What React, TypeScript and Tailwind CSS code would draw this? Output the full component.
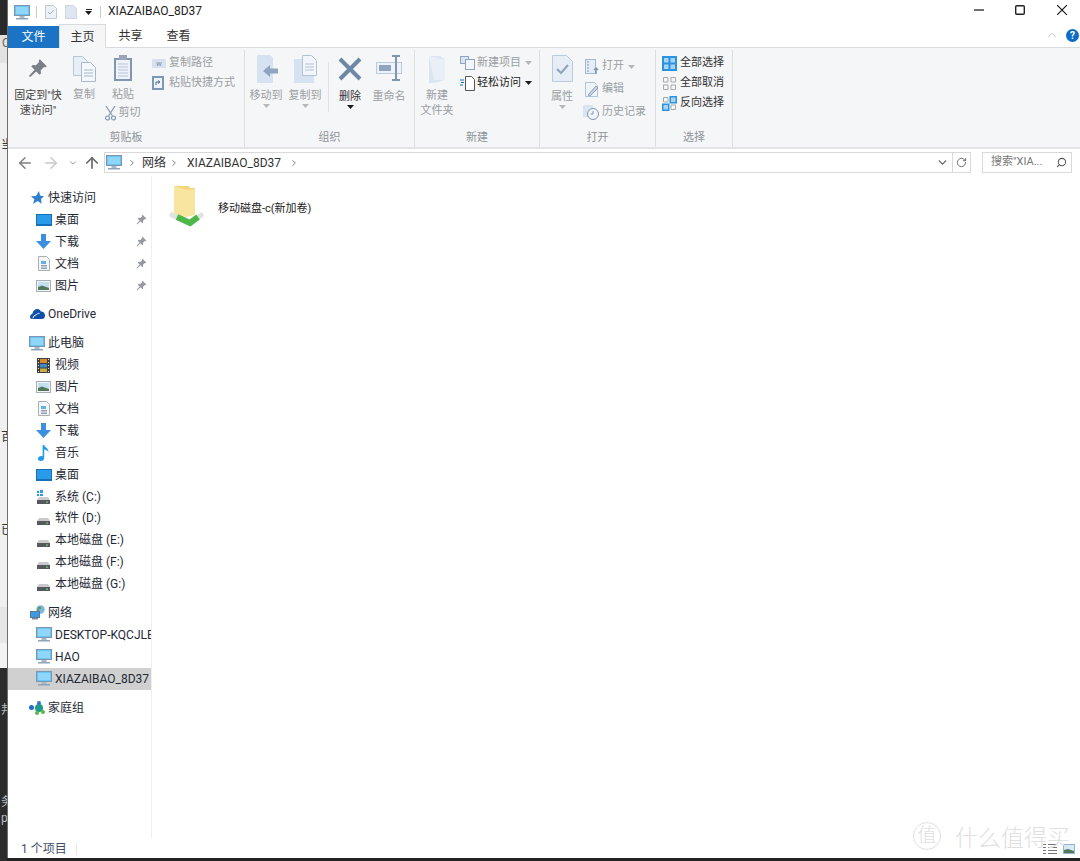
import React from "react";
import { ArrowLeft, ArrowRight, ArrowUp, ChevronDown, ChevronRight, ChevronUp, RotateCw, Search } from "lucide-react";

const font = { fontFamily: 'Roboto, "Noto Sans CJK SC", sans-serif' };

const Caret = ({ dark = false }: { dark?: boolean }) => (
  <svg width="7" height="4" viewBox="0 0 7 4" className="block">
    <path d="M0 0h7L3.5 4z" fill={dark ? "#1a1a1a" : "#b8b8b8"} />
  </svg>
);

const PinIcon = ({ size = 12, color = "#8a9099" }: { size?: number; color?: string }) => (
  <svg width={size} height={size} viewBox="0 0 16 16">
    <path d="M9.5 1 15 6.5l-1.2 1-1-.4-2.6 2.6.2 2.6-1.2 1.1-2.6-2.7L2 15l-1 0 0-1 4.3-4.6-2.7-2.6 1.1-1.2 2.6.2 2.6-2.6-.4-1z" fill={color} />
  </svg>
);

const MonitorIcon = ({ w = 16, h = 15 }: { w?: number; h?: number }) => (
  <svg width={w} height={h} viewBox="0 0 16 15">
    <rect x="0.5" y="0.5" width="15" height="10" fill="#4db4f0" stroke="#7d95ad" />
    <rect x="1.5" y="1.5" width="13" height="8" fill="#8ed6fa" />
    <rect x="5.5" y="11" width="5" height="2" fill="#a9b8c8" />
    <rect x="2" y="13" width="12" height="1.5" fill="#8fa3b8" />
  </svg>
);

const DesktopIcon = () => (
  <svg width="16" height="12" viewBox="0 0 16 12">
    <rect x="0.5" y="0.5" width="15" height="10" fill="#2a9be8" stroke="#1670b8" />
    <rect x="0" y="10" width="16" height="2" fill="#1670b8" />
  </svg>
);

const DownloadIcon = () => (
  <svg width="15" height="15" viewBox="0 0 15 15">
    <path d="M5 0h5v7h5l-7.5 8L0 7h5z" fill="#3a8fe0" />
  </svg>
);

const DocIcon = () => (
  <svg width="12" height="15" viewBox="0 0 12 15">
    <path d="M.5.5h8l3 3v11H.5z" fill="#f4f6f8" stroke="#a8aeb5" />
    <rect x="3" y="5" width="5" height="3" fill="#62b0e8" />
    <path d="M3 9.5h6M3 11h6M3 12.5h6" stroke="#8da0b2" />
  </svg>
);

const PictureIcon = () => (
  <svg width="15" height="12" viewBox="0 0 15 12">
    <rect x="0.5" y="0.5" width="14" height="11" fill="#f2f4f6" stroke="#a8aeb5" />
    <rect x="2" y="2" width="11" height="8" fill="#c4dff0" />
    <path d="M2 7l4-1.5L13 8v2H2z" fill="#52795a" />
  </svg>
);

const VideoIcon = () => (
  <svg width="13" height="15" viewBox="0 0 13 15">
    <rect width="13" height="15" fill="#3c3f44" />
    <rect x="3" y="1" width="7" height="4" fill="#d98a2b" />
    <rect x="3" y="6" width="7" height="3.5" fill="#3e8ac8" />
    <rect x="3" y="10.5" width="7" height="3.5" fill="#c7b23e" />
    <path d="M1 1.5h1M1 4.5h1M1 7.5h1M1 10.5h1M1 13.5h1M11 1.5h1M11 4.5h1M11 7.5h1M11 10.5h1M11 13.5h1" stroke="#e4e4e4" />
  </svg>
);

const MusicIcon = () => (
  <svg width="11" height="16" viewBox="0 0 11 16">
    <path d="M4.6 0h1.6c.2 2.4 4.8 3.2 4.2 7.4C9.8 5.6 8 4.8 6.2 4.6V13c0 1.8-1.6 3-3.4 3C1.2 16 0 15 0 13.7c0-1.6 1.8-2.7 3.4-2.6.5 0 .9.1 1.2.3z" fill="#1f9bea" />
  </svg>
);

const DriveIcon = ({ win = false }: { win?: boolean }) => (
  <svg width="13" height="14" viewBox="0 0 13 14">
    {win && <path d="M0 1h2v2H0zM3 0h3v3H3zM0 4h2v2H0zM3 4h3v2H3z" fill="#2d9ae8" />}
    <path d="M2 7h9l2 3H0z" fill="#c8cacc" />
    <rect y="10" width="13" height="4" fill="#55585c" />
    <rect x="9" y="11.5" width="2" height="1.2" fill="#6fd06a" />
  </svg>
);

const StarIcon = () => (
  <svg width="14" height="14" viewBox="0 0 14 14">
    <path d="M9 0l1 4.6 4 .6-3 2.8.6 4.8L7.6 10 3 13l1.4-4.8L1 5.2l5-.2z" fill="#2f7fd0" />
  </svg>
);

const CloudIcon = () => (
  <svg width="15" height="10" viewBox="0 0 15 10">
    <path d="M0 8c0-1.600 1-2.800 2.300-3C3 2 5-.2 7.400 0c1.700.1 2.900 1.100 3.500 2.500C13 2.400 15 4 15 6.500c0 2-1.200 3.500-3 3.500H2C.8 10 0 9.200 0 8z" fill="#0f4fa8" />
    <path d="M3 9.300c.2-1.800 1.500-3.200 3.200-3.400.7-1 2-1.700 3.300-1.500" fill="none" stroke="#fff" strokeWidth="1" />
  </svg>
);

const NetworkIcon = () => (
  <svg width="15" height="15" viewBox="0 0 15 15">
    <circle cx="10.500" cy="4.500" r="4.200" fill="#7bb4dd" />
    <path d="M8 2h3v2H9v2H7z" fill="#5f9a52" />
    <rect x="0.500" y="6.500" width="9" height="6" fill="#3a9be4" stroke="#5b7794" />
    <rect x="2" y="13" width="6" height="1.500" fill="#7d8ea0" />
  </svg>
);

const HomegroupIcon = () => (
  <svg width="16" height="14" viewBox="0 0 16 14">
    <circle cx="2.500" cy="6.500" r="2.500" fill="#1f6fc4" />
    <circle cx="10" cy="7" r="4" fill="#1d9a8a" />
    <circle cx="10" cy="2" r="2" fill="#2b74c8" />
    <circle cx="14" cy="11" r="2" fill="#58b848" />
    <circle cx="8" cy="12" r="2" fill="#58b848" />
  </svg>
);

const navRow = "flex items-center h-[21.9px] text-[12px] text-[#1f2a36] whitespace-nowrap";

const QuickItem = ({ icon, label }: { icon: React.ReactNode; label: string }) => (
  <div className={navRow + " pl-[24px]"}>
    <span className="w-[23px] flex justify-center shrink-0">{icon}</span>
    <span className="flex-1">{label}</span>
    <span className="mr-[4px] opacity-90"><PinIcon size={11} /></span>
  </div>
);

const SubItem = ({ icon, label, selected = false }: { icon: React.ReactNode; label: string; selected?: boolean }) => (
  <div className={selected ? navRow + " pl-[24px] bg-[#d0d0d0]" : navRow + " pl-[24px]"}>
    <span className="w-[23px] flex justify-center shrink-0">{icon}</span>
    <span className="overflow-hidden">{label}</span>
  </div>
);

const RootItem = ({ icon, label }: { icon: React.ReactNode; label: string }) => (
  <div className={navRow + " pl-[18px]"}>
    <span className="w-[22px] flex justify-center shrink-0">{icon}</span>
    <span>{label}</span>
  </div>
);

const GroupLabel = ({ text }: { text: string }) => (
  <div className="h-[17px] text-center text-[11px] leading-[16px] text-[#8f9499]">{text}</div>
);

const BigLabel = ({ lines, caret, dark }: { lines: string[]; caret?: boolean; dark?: boolean }) => (
  <div className={dark ? "text-center text-[11px] leading-[15px] text-[#333]" : "text-center text-[11px] leading-[15px] text-[#9a9ea3]"}>
    {lines.map((l) => (
      <div key={l} className="whitespace-nowrap">{l}</div>
    ))}
    {caret && <div className="flex justify-center mt-[1px]"><Caret dark={dark} /></div>}
  </div>
);

const App = () => {
  return (
    <div className="relative flex w-[1080px] h-[861px] overflow-hidden bg-[#222]" style={font}>
      {/* sliver of the window behind */}
      <div className="w-[7px] shrink-0 flex flex-col text-[12px] leading-[16px] text-[#333] overflow-hidden whitespace-nowrap">
        <div className="h-[35px] bg-[#2a2a2a]" />
        <div className="h-[28px] bg-[#e2e2e2] pl-[2px] text-[#666]">Q</div>
        <div className="h-[544px] bg-[#f0f0f0] pl-[1px]">
          <div className="h-[74px]" />
          <div className="h-[16px]">当</div>
          <div className="h-[276px]" />
          <div className="h-[16px]">百</div>
          <div className="h-[77px]" />
          <div className="h-[16px]">已</div>
        </div>
        <div className="h-[36px] bg-[#e6e6e6]" />
        <div className="h-[25px] bg-[#f2f2f2]" />
        <div className="flex-1 bg-[#2c2c2c] pl-[1px] text-[#bbb]">
          <div className="h-[34px]" />
          <div className="h-[16px]">邦</div>
          <div className="h-[76px]" />
          <div className="h-[16px]">务</div>
          <div className="h-[16px]">p</div>
        </div>
      </div>

      <div className="flex-1 flex flex-col min-w-0 mb-[3px] bg-white border-l border-[#6e6e6e]">
        {/* title bar */}
        <div className="h-[24px] flex items-center shrink-0 pl-[6px]">
          <MonitorIcon />
          <div className="w-px h-[12px] bg-[#c8c8c8] ml-[6px] mr-[8px]" />
          <svg width="12" height="14" viewBox="0 0 12 14">
            <path d="M.5.5h8l3 3v10H.5z" fill="#eef2f8" stroke="#c0c8d4" />
            <path d="M3 7l2 2 4-4" fill="none" stroke="#a6b2c2" />
          </svg>
          <svg width="12" height="14" viewBox="0 0 12 14" className="ml-[8px]">
            <path d="M.5.5h8l3 3v10H.5z" fill="#dfe6f2" stroke="#cfd6e2" />
          </svg>
          <span className="ml-[8px] flex flex-col items-center gap-[1px]">
            <span className="block w-[6px] h-px bg-[#222]" />
            <Caret dark />
          </span>
          <div className="w-px h-[12px] bg-[#c8c8c8] ml-[8px] mr-[7px]" />
          <span className="text-[12px] text-[#222] -mt-[2px]">XIAZAIBAO_8D37</span>
          <div className="ml-auto flex items-center -mt-[4px]">
            <svg width="10" height="10" viewBox="0 0 10 10"><path d="M0 5h10" stroke="#111" strokeWidth="1.2" /></svg>
            <svg width="10" height="10" viewBox="0 0 10 10" className="ml-[31px]"><rect x="0.700" y="0.700" width="8.600" height="8.600" rx="1" fill="none" stroke="#222" strokeWidth="1.400" /></svg>
            <svg width="10" height="10" viewBox="0 0 10 10" className="ml-[32px] mr-[13px]"><path d="M0 0l10 10M10 0L0 10" stroke="#111" strokeWidth="1.100" /></svg>
          </div>
        </div>

        {/* tabs */}
        <div className="h-[24px] flex items-end shrink-0 text-[12px] text-[#333] border-b border-[#dadbdc]">
          <div className="w-[51px] h-[22px] bg-[#1a73c4] text-white flex items-center justify-center mb-[-1px]">文件</div>
          <div className="w-[47px] h-[24px] bg-[#f5f6f7] border-x border-t border-[#dadbdc] flex items-center justify-center mb-[-1px]">主页</div>
          <div className="w-[49px] h-[22px] flex items-center justify-center">共享</div>
          <div className="w-[47px] h-[22px] flex items-center justify-center">查看</div>
          <div className="ml-auto flex items-center h-[24px]">
            <ChevronUp size={14} color="#bbb" strokeWidth={1.5} />
            <span className="ml-[7px] mr-[1px] w-[13px] h-[13px] rounded-full bg-[#0f6cc4] text-white text-[10px] font-bold flex items-center justify-center">?</span>
          </div>
        </div>

        {/* ribbon */}
        <div className="h-[101px] shrink-0 bg-[#f5f6f7] flex border-b-2 border-[#e1e3e5] pt-[2px] text-[11px] text-[#9a9ea3]">
          {/* clipboard */}
          <div className="w-[237px] shrink-0 flex flex-col border-r border-[#dcdee0]">
            <div className="flex-1 flex">
              <div className="w-[60px] flex flex-col items-center pt-[8px]">
                <PinIcon size={20} color="#7b8088" />
                <div className="mt-[10px] text-center text-[11px] leading-[15px] text-[#444] whitespace-nowrap">
                  <div>固定到"快</div>
                  <div>速访问"</div>
                </div>
              </div>
              <div className="w-[32px] flex flex-col items-center pt-[6px]">
                <svg width="23" height="26" viewBox="0 0 23 26">
                  <path d="M.5.5h9l5 5v14H.5z" fill="#e8eef6" stroke="#b8c6da" />
                  <path d="M8.500 6.500h9l5 5v14h-14z" fill="#f4f7fb" stroke="#a9bad0" />
                  <path d="M11 14h9M11 17h9M11 20h9" stroke="#a9b8cc" />
                </svg>
                <div className="mt-[5px]"><BigLabel lines={["复制"]} /></div>
              </div>
              <div className="w-[46px] flex flex-col items-center pt-[5px]">
                <svg width="20" height="27" viewBox="0 0 20 27">
                  <rect x="1" y="3" width="18" height="23" fill="#8296b2" />
                  <rect x="3" y="5" width="14" height="19" fill="#eef3f9" />
                  <rect x="6" y="0" width="8" height="5" fill="#9aa6b6" />
                  <path d="M5 9h10M5 12h10M5 15h10M5 18h10M5 21h10" stroke="#b6c4d6" />
                </svg>
                <div className="mt-[5px]"><BigLabel lines={["粘贴"]} /></div>
                <div className="flex items-center mt-[3px] -ml-[1px]">
                  <svg width="11" height="15" viewBox="0 0 11 15" fill="none" stroke="#8499b4" strokeWidth="1.2">
                    <path d="M1 0l6.500 10M10 0L3.500 10" />
                    <circle cx="2.500" cy="12" r="2" />
                    <circle cx="8.500" cy="12" r="2" />
                  </svg>
                  <span className="ml-[3px] whitespace-nowrap">剪切</span>
                </div>
              </div>
              <div className="flex flex-col pt-[3px] ml-[6px]">
                <div className="flex items-center whitespace-nowrap h-[20px]">
                  <span className="w-[14px] h-[9px] bg-[#d7e1ef] text-[6px] leading-[9px] text-[#6c7c90] text-center">W</span>
                  <span className="ml-[3px]">复制路径</span>
                </div>
                <div className="flex items-center whitespace-nowrap h-[20px]">
                  <svg width="12" height="14" viewBox="0 0 12 14">
                    <rect width="12" height="14" fill="#7f97b5" />
                    <rect x="2" y="2" width="8" height="10" fill="#eef3f9" />
                    <path d="M4 9V6h3M6 4.500 8 6 6 7.500" fill="none" stroke="#52687f" />
                  </svg>
                  <span className="ml-[5px]">粘贴快捷方式</span>
                </div>
              </div>
            </div>
            <GroupLabel text="剪贴板" />
          </div>

          {/* organise */}
          <div className="w-[170px] shrink-0 flex flex-col border-r border-[#dcdee0]">
            <div className="flex-1 flex pt-[5px]">
              <div className="w-[40px] ml-[1px] flex flex-col items-center">
                <svg width="24" height="28" viewBox="0 0 24 28">
                  <path d="M3 0h13l3 3v25H3z" fill="#d6e2f2" />
                  <path d="M9 16l7-6v3.500h8v5h-8V22z" fill="#8ea4c0" />
                </svg>
                <div className="mt-[5px]"><BigLabel lines={["移动到"]} caret /></div>
              </div>
              <div className="w-[38px] flex flex-col items-center">
                <svg width="24" height="28" viewBox="0 0 24 28">
                  <path d="M1 4h20v24H1z" fill="#d6e2f2" />
                  <path d="M9.500.5h9l5 5v15h-14z" fill="#f2f5fa" stroke="#b4c2d6" />
                  <path d="M12 9h9M12 12h9M12 15h9" stroke="#b4c2d6" />
                </svg>
                <div className="mt-[5px]"><BigLabel lines={["复制到"]} caret /></div>
              </div>
              <div className="w-px h-[50px] mt-[7px] ml-[4px] bg-[#e1e3e5]" />
              <div className="w-[42px] flex flex-col items-center">
                <div className="h-[28px] flex items-center">
                  <svg width="24" height="24" viewBox="0 0 24 24"><path d="M2 2l20 20M22 2L2 22" stroke="#6f87a6" strokeWidth="4" /></svg>
                </div>
                <div className="mt-[6px]"><BigLabel lines={["删除"]} caret dark /></div>
              </div>
              <div className="w-[36px] flex flex-col items-center">
                <svg width="27" height="27" viewBox="0 0 27 27">
                  <rect x="0.500" y="7.500" width="25" height="11" fill="#eef3f9" stroke="#bccadb" />
                  <rect x="3" y="10" width="12" height="6" fill="#8fa4be" />
                  <path d="M16 1h4M24 1h-4M20 1v24M16 25h8" fill="none" stroke="#7f95b0" strokeWidth="2" />
                </svg>
                <div className="mt-[7px]"><BigLabel lines={["重命名"]} /></div>
              </div>
            </div>
            <GroupLabel text="组织" />
          </div>

          {/* new */}
          <div className="w-[125px] shrink-0 flex flex-col border-r border-[#dcdee0]">
            <div className="flex-1 flex">
              <div className="w-[44px] flex flex-col items-center pt-[6px]">
                <svg width="17" height="27" viewBox="0 0 17 27">
                  <path d="M0 0h11l5 3v21l-11 3H0z" fill="#dbe5f2" />
                  <path d="M0 0l12 3 4 0v21H5z" fill="#e9eff7" />
                </svg>
                <div className="mt-[5px]"><BigLabel lines={["新建", "文件夹"]} /></div>
              </div>
              <div className="flex flex-col pt-[3px] ml-[1px]">
                <div className="flex items-center whitespace-nowrap h-[20px]">
                  <svg width="15" height="14" viewBox="0 0 15 14">
                    <rect x="0.500" y="0.500" width="8" height="7" fill="#dbe5f2" stroke="#8fa4be" />
                    <rect x="5.500" y="3.500" width="9" height="10" fill="#f2f5fa" stroke="#8fa4be" />
                  </svg>
                  <span className="ml-[2px]">新建项目</span>
                  <span className="ml-[4px]"><Caret /></span>
                </div>
                <div className="flex items-center whitespace-nowrap h-[20px] text-[#222]">
                  <svg width="15" height="15" viewBox="0 0 15 15">
                    <path d="M5.500.5h6l3 3v11h-9z" fill="#fff" stroke="#555" />
                    <path d="M0 4h4M1 6.500h3M0 9h3" stroke="#1a73c4" strokeWidth="1.200" />
                  </svg>
                  <span className="ml-[2px]">轻松访问</span>
                  <span className="ml-[4px]"><Caret dark /></span>
                </div>
              </div>
            </div>
            <GroupLabel text="新建" />
          </div>

          {/* open */}
          <div className="w-[116px] shrink-0 flex flex-col border-r border-[#dcdee0]">
            <div className="flex-1 flex">
              <div className="w-[44px] flex flex-col items-center pt-[5px]">
                <svg width="21" height="27" viewBox="0 0 21 27">
                  <path d="M.5.5h14l6 6v20H.5z" fill="#e6edf7" stroke="#bccadb" />
                  <path d="M5 14l4 4 7-8" fill="none" stroke="#8fa4be" strokeWidth="2" />
                </svg>
                <div className="mt-[7px]"><BigLabel lines={["属性"]} caret /></div>
              </div>
              <div className="flex flex-col pt-[5px] ml-[1px]">
                <div className="flex items-center whitespace-nowrap h-[23px]">
                  <svg width="15" height="15" viewBox="0 0 15 15">
                    <rect x="0.500" y="0.500" width="10" height="14" fill="#e6edf7" stroke="#a8b8cc" />
                    <path d="M2 3h2M2 6h2M2 9h2M2 12h2" stroke="#7f95b0" />
                    <path d="M11 15V9M9 11l2-2 2 2" fill="none" stroke="#7f95b0" strokeWidth="1.500" />
                  </svg>
                  <span className="ml-[2px]">打开</span>
                  <span className="ml-[4px]"><Caret /></span>
                </div>
                <div className="flex items-center whitespace-nowrap h-[23px]">
                  <svg width="15" height="15" viewBox="0 0 15 15">
                    <path d="M.5.5h9l3 3v11H.5z" fill="#eef3f9" stroke="#b4c2d6" />
                    <path d="M3 13l8-9 2 2-8 8z" fill="#c6d2e2" stroke="#8fa4be" />
                  </svg>
                  <span className="ml-[2px]">编辑</span>
                </div>
                <div className="flex items-center whitespace-nowrap h-[23px] -ml-[2px]">
                  <svg width="17" height="15" viewBox="0 0 17 15">
                    <rect x="0" y="0" width="10" height="12" fill="#dbe5f2" />
                    <circle cx="10" cy="9" r="5.500" fill="#f2f5fa" stroke="#7f95b0" />
                    <path d="M10 6v3H7.500" fill="none" stroke="#7f95b0" />
                  </svg>
                  <span className="ml-[2px]">历史记录</span>
                </div>
              </div>
            </div>
            <GroupLabel text="打开" />
          </div>

          {/* select */}
          <div className="w-[77px] shrink-0 flex flex-col border-r border-[#dcdee0]">
            <div className="flex-1 flex flex-col pt-[3px] pl-[6px] text-[#333]">
              <div className="flex items-center whitespace-nowrap h-[20px]">
                <svg width="15" height="15" viewBox="0 0 15 15">
                  <rect width="15" height="15" fill="#2d93e0" />
                  <path d="M2 2h4.500v4.500H2zM8.500 2H13v4.500H8.500zM2 8.500h4.500V13H2zM8.500 8.500H13V13H8.500z" fill="#a5d4f4" />
                </svg>
                <span className="ml-[3px]">全部选择</span>
              </div>
              <div className="flex items-center whitespace-nowrap h-[20px]">
                <svg width="15" height="15" viewBox="0 0 15 15" fill="none" stroke="#a9a9a9">
                  <path d="M1.500 1.500h4.500v4.500H1.500zM9 1.500h4.500v4.500H9zM1.500 9h4.500v4.500H1.500zM9 9h4.500v4.500H9z" />
                </svg>
                <span className="ml-[3px]">全部取消</span>
              </div>
              <div className="flex items-center whitespace-nowrap h-[20px]">
                <svg width="15" height="15" viewBox="0 0 15 15">
                  <g fill="none" stroke="#a9a9a9">
                    <path d="M1.500 1.500h4.500v4.500H1.500zM9 9h4.500v4.500H9z" />
                  </g>
                  <path d="M7.500 0H15v7.500H7.500zM0 7.500h7.500V15H0z" fill="#2d93e0" />
                  <path d="M9 1.500h4.500V6H9zM1.500 9H6v4.500H1.500z" fill="#a5d4f4" />
                </svg>
                <span className="ml-[3px]">反向选择</span>
              </div>
            </div>
            <GroupLabel text="选择" />
          </div>
        </div>

        {/* address bar */}
        <div className="h-[27px] shrink-0 flex items-center">
          <ArrowLeft size={18} color="#7f7f7f" className="ml-[8px]" />
          <ArrowRight size={18} color="#c8c8c8" className="ml-[8px]" />
          <ChevronDown size={10} color="#888" className="ml-[8px]" />
          <ArrowUp size={18} color="#666" strokeWidth={2.2} className="ml-[5px]" />
          <div className="ml-[3px] w-[867px] h-[21px] border border-[#d9d9d9] flex items-center text-[12px] text-[#333]">
            <span className="ml-[1px]"><MonitorIcon /></span>
            <ChevronRight size={10} color="#666" className="ml-[5px]" />
            <span className="ml-[5px]">网络</span>
            <ChevronRight size={10} color="#666" className="ml-[3px]" />
            <span className="ml-[8px]">XIAZAIBAO_8D37</span>
            <ChevronRight size={10} color="#666" className="ml-[8px]" />
            <ChevronDown size={13} color="#666" strokeWidth={2.5} className="ml-auto mr-[3px]" />
            <div className="w-[18px] h-full border-l border-[#d9d9d9] flex items-center justify-center">
              <RotateCw size={11} color="#666" />
            </div>
          </div>
          <div className="ml-[11px] w-[90px] h-[21px] border border-[#d9d9d9] flex items-center pl-[8px] text-[11px] text-[#777] whitespace-nowrap">
            <span>搜索"XIA...</span>
            <Search size={11} color="#555" strokeWidth={2.2} className="ml-auto mr-[4px] -scale-x-100" />
          </div>
        </div>

        {/* body */}
        <div className="flex-1 flex min-h-0 bg-white">
          <div className="w-[144px] shrink-0 border-r border-[#efefef] pt-[11px] overflow-hidden">
            <RootItem icon={<StarIcon />} label="快速访问" />
            <QuickItem icon={<DesktopIcon />} label="桌面" />
            <QuickItem icon={<DownloadIcon />} label="下载" />
            <QuickItem icon={<DocIcon />} label="文档" />
            <QuickItem icon={<PictureIcon />} label="图片" />
            <div className="h-[7px]" />
            <RootItem icon={<CloudIcon />} label="OneDrive" />
            <div className="h-[7px]" />
            <RootItem icon={<MonitorIcon />} label="此电脑" />
            <SubItem icon={<VideoIcon />} label="视频" />
            <SubItem icon={<PictureIcon />} label="图片" />
            <SubItem icon={<DocIcon />} label="文档" />
            <SubItem icon={<DownloadIcon />} label="下载" />
            <SubItem icon={<MusicIcon />} label="音乐" />
            <SubItem icon={<DesktopIcon />} label="桌面" />
            <SubItem icon={<DriveIcon win />} label="系统 (C:)" />
            <SubItem icon={<DriveIcon />} label="软件 (D:)" />
            <SubItem icon={<DriveIcon />} label="本地磁盘 (E:)" />
            <SubItem icon={<DriveIcon />} label="本地磁盘 (F:)" />
            <SubItem icon={<DriveIcon />} label="本地磁盘 (G:)" />
            <div className="h-[7px]" />
            <RootItem icon={<NetworkIcon />} label="网络" />
            <SubItem icon={<MonitorIcon />} label="DESKTOP-KQCJLE" />
            <SubItem icon={<MonitorIcon />} label="HAO" />
            <SubItem icon={<MonitorIcon />} label="XIAZAIBAO_8D37" selected />
            <div className="h-[7px]" />
            <RootItem icon={<HomegroupIcon />} label="家庭组" />
          </div>
          <div className="flex-1 pl-[16px] pt-[10px]">
            <div className="flex items-center">
              <svg width="36" height="43" viewBox="0 0 36 43">
                <path d="M6 0h15l1 2h5v27H6z" fill="#f2d77f" />
                <path d="M6 0l13 4 8-1v26L14 32l-8-3z" fill="#f8e6a0" />
                <path d="M2 28l8 4M29 32l6-4" stroke="#dfe4df" strokeWidth="5" />
                <path d="M9 31l13 6 8-6" fill="none" stroke="#4cb848" strokeWidth="6" />
              </svg>
              <span className="ml-[14px] pt-[4px] text-[11px] text-[#222] whitespace-nowrap">移动磁盘-c(新加卷)</span>
            </div>
          </div>
        </div>

        {/* status bar */}
        <div className="h-[20px] shrink-0 flex items-center pt-[1px] text-[12px] text-[#3d5066]">
          <span className="ml-[13px]">1 个项目</span>
          <div className="w-px h-[12px] bg-[#e8e8e8] ml-[9px]" />
          <div className="ml-auto flex items-center gap-[6px] mr-[5px]">
            <svg width="14" height="11" viewBox="0 0 14 11" fill="none" stroke="#777">
              <path d="M0 1.500h3M0 4.500h3M0 7.500h3M0 10.500h3M5 1.500h9M5 4.500h9M5 7.500h9M5 10.500h9" />
            </svg>
            <svg width="12" height="10" viewBox="0 0 12 10">
              <rect width="12" height="10" fill="#8fb4d4" />
              <rect x="1" y="1" width="10" height="8" fill="#d5ebf7" />
              <path d="M1 6l4-1 6 2v2H1z" fill="#52795a" />
            </svg>
          </div>
        </div>
      </div>

      {/* watermark stamped over the shot */}
      <div className="absolute right-[10px] bottom-[11px] flex items-center text-[#e0e0e0] pointer-events-none">
        <span className="w-[28px] h-[28px] rounded-full border border-[#e0e0e0] flex items-center justify-center text-[19px] font-light">值</span>
        <span className="ml-[14px] text-[23px] leading-none font-light whitespace-nowrap" style={{ fontFamily: '"Noto Sans CJK SC", sans-serif' }}>什么值得买</span>
      </div>
    </div>
  );
};

export default App;
